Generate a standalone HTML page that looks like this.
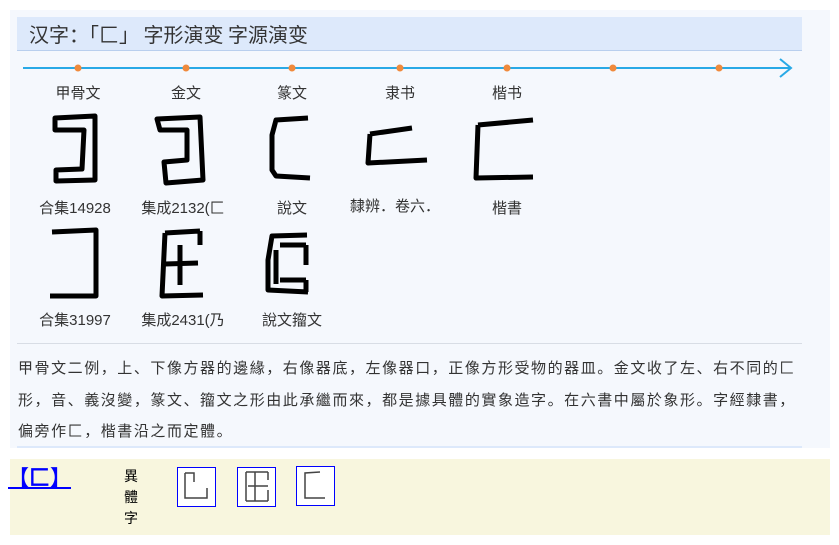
<!DOCTYPE html>
<html><head><meta charset="utf-8"><style>
body{margin:0;width:839px;height:545px;background:#fff;font-family:"Liberation Sans","Noto Sans CJK SC",sans-serif;position:relative;overflow:hidden}
.a{position:absolute}
.cjk{font-family:"Noto Sans CJK SC",sans-serif}
.panel{left:10px;top:10px;width:820px;height:438px;background:#f5f8fd}
.hdr{left:17px;top:17px;width:785px;height:33px;background:#dde9fb;border-bottom:1px solid #b9cfee}
.hdr span{position:absolute;left:12px;top:2px;font-size:20px;color:#333}
.lbl{font-size:15px;color:#333;text-align:center;width:110px;white-space:nowrap}
.txt{left:18px;width:800px;font-size:15px;color:#333;line-height:31.5px;top:352px;white-space:nowrap;letter-spacing:1.55px}
.yel{left:10px;top:459px;width:820px;height:76px;background:#f8f6de}
.box{width:37px;height:38px;border:1px solid #00f;background:#fff}
</style></head><body>
<div class="a panel"></div>
<div class="a hdr"><span class="cjk">汉字：「匚」 字形演变 字源演变</span></div>
<svg class="a" style="left:0;top:0" width="839" height="330">
<line x1="23" y1="68" x2="790" y2="68" stroke="#29a9e6" stroke-width="2"/>
<polyline points="780,59 791,68 780,77" fill="none" stroke="#29a9e6" stroke-width="2"/>
<g fill="#f08a3c"><circle cx="78" cy="68" r="3.5"/><circle cx="186" cy="68" r="3.5"/><circle cx="292" cy="68" r="3.5"/><circle cx="400" cy="68" r="3.5"/><circle cx="507" cy="68" r="3.5"/><circle cx="613" cy="68" r="3.5"/><circle cx="719" cy="68" r="3.5"/></g>
<g fill="none" stroke="#000" stroke-width="5" stroke-linejoin="round">
<path d="M55 118 L95 116 L95 180 L56 181 L56 170 L82 169 L84 130 L55 130 Z"/>
<path d="M157 119 L200 117 L203 180 L166 183 L164 162 L187 160 L187 130 L160 130 Z"/>
<path d="M308 118 L276 120 L272 135 L272 170 L276 176 L310 178"/>
<path d="M370 134 L412 128 M370 134 L368 163 L427 160"/>
<path d="M478 125 L533 120 M478 125 L476 178 L533 177"/>
<path d="M52 232 L96 230 L96 296 L50 296"/>
<path d="M165 233 L200 231 M165 233 L162 296 L203 295 M165 264 L198 263 M180 245 L180 285 M200 231 L200 245"/>
<path d="M307 235 L272 236 L268 260 L268 290 L308 292 M280 245 L306 245 M276 250 L276 284 M280 280 L306 280 M306 245 L306 265 M306 280 L306 292"/>
</g>
</svg>
<div class="a lbl cjk" style="left:23px;top:82px">甲骨文</div>
<div class="a lbl cjk" style="left:131px;top:82px">金文</div>
<div class="a lbl cjk" style="left:237px;top:82px">篆文</div>
<div class="a lbl cjk" style="left:345px;top:82px">隶书</div>
<div class="a lbl cjk" style="left:452px;top:82px">楷书</div>
<div class="a lbl" style="left:20px;top:197px">合集14928</div>
<div class="a lbl" style="left:128px;top:197px">集成2132(匚</div>
<div class="a lbl" style="left:237px;top:197px">說文</div>
<div class="a lbl cjk" style="left:340px;top:195px">隸辨．卷六．</div>
<div class="a lbl" style="left:452px;top:197px">楷書</div>
<div class="a lbl" style="left:20px;top:309px">合集31997</div>
<div class="a lbl" style="left:128px;top:309px">集成2431(乃</div>
<div class="a lbl" style="left:237px;top:309px">說文籀文</div>
<div class="a" style="left:17px;top:343px;width:785px;height:1px;background:#d8dde5"></div>
<div class="a txt cjk">甲骨文二例，上、下像方器的邊緣，右像器底，左像器口，正像方形受物的器皿。金文收了左、右不同的匚<br>形，音、義沒變，篆文、籀文之形由此承繼而來，都是據具體的實象造字。在六書中屬於象形。字經隸書，<br>偏旁作⼕，楷書沿之而定體。</div>
<div class="a" style="left:17px;top:446px;width:785px;height:2px;background:#dde9fb"></div>
<div class="a yel"></div>
<div class="a cjk" style="left:8px;top:462px;font-size:21px;font-weight:bold;color:#00f;text-decoration:underline;line-height:30px">【匚】</div>
<div class="a cjk" style="left:124px;top:466px;font-size:14px;line-height:21px;width:16px;color:#000">異體字</div>
<div class="a box" style="left:177px;top:467px"></div>
<div class="a box" style="left:237px;top:467px"></div>
<div class="a box" style="left:296px;top:466px"></div>
<svg class="a" style="left:0;top:460px" width="839" height="60"><g fill="none" stroke="#444" stroke-width="1.5">
<path d="M185 13 L185 38 L207 38 L207 28 M185 13 L194 13 L194 22"/>
<path d="M246 12 L246 41 M246 12 L268 12 M246 41 L268 41 M248 26 L268 26 M255 12 L255 41 M268 12 L268 20 M268 30 L268 41"/>
<path d="M320 12 L305 13 L305 38 L325 38"/>
</g></svg>
</body></html>
